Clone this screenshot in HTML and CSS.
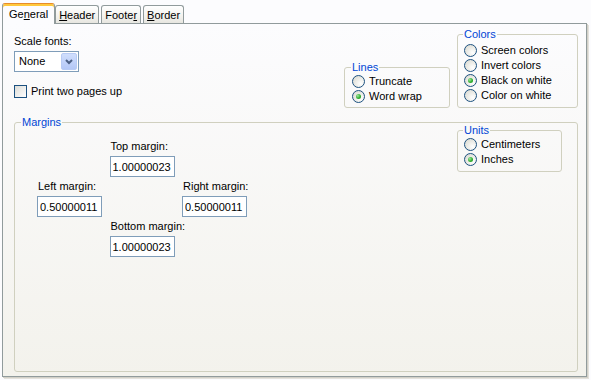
FILE: index.html
```html
<!DOCTYPE html>
<html lang="en">
<head>
  <meta charset="UTF-8" />
  <title>Page Setup</title>
  <link rel="stylesheet" href="styles.css">
</head>
<body>
  <!-- Tab strip -->
  <div class="tabs">
    <div class="tab active">Ge<u>n</u>eral</div>
    <div class="tab"><u>H</u>eader</div>
    <div class="tab">Foote<u>r</u></div>
    <div class="tab"><u>B</u>order</div>
  </div>

  <div class="panel">
    <div class="top-row">
      <div class="general">
        <div class="label">Scale fonts:</div>
        <div class="combo">
          <span class="combo-value">None</span>
          <span class="combo-btn">
            <svg width="8" height="6" viewBox="0 0 8 6"><path d="M1 1 L4 4 L7 1" fill="none" stroke="#4d6185" stroke-width="2"/></svg>
          </span>
        </div>
        <div class="check-row"><span class="check"></span>Print two pages up</div>
      </div>

      <fieldset class="group lines">
        <legend>Lines</legend>
        <div class="radio-row"><span class="radio"></span>Truncate</div>
        <div class="radio-row"><span class="radio on"></span>Word wrap</div>
      </fieldset>

      <fieldset class="group colors">
        <legend>Colors</legend>
        <div class="radio-row"><span class="radio"></span>Screen colors</div>
        <div class="radio-row"><span class="radio"></span>Invert colors</div>
        <div class="radio-row"><span class="radio on"></span>Black on white</div>
        <div class="radio-row"><span class="radio"></span>Color on white</div>
      </fieldset>
    </div>

    <fieldset class="group margins">
      <legend>Margins</legend>
      <div class="margins-body">
        <div class="margin-grid">
          <div class="field top">
            <div class="label">Top margin:</div>
            <input class="num" type="text" value="1.00000023">
          </div>
          <div class="field left">
            <div class="label">Left margin:</div>
            <input class="num" type="text" value="0.50000011">
          </div>
          <div class="field right">
            <div class="label">Right margin:</div>
            <input class="num" type="text" value="0.50000011">
          </div>
          <div class="field bottom">
            <div class="label">Bottom margin:</div>
            <input class="num" type="text" value="1.00000023">
          </div>
        </div>

        <fieldset class="group units">
          <legend>Units</legend>
          <div class="radio-row"><span class="radio"></span>Centimeters</div>
          <div class="radio-row"><span class="radio on"></span>Inches</div>
        </fieldset>
      </div>
    </fieldset>
  </div>
</body>
</html>
```

FILE: styles.css
```css
* {
  box-sizing: border-box;
}

body {
  margin: 0;
  width: 591px;
  height: 380px;
  overflow: hidden;
  background: #fcfcfe;
  color: #000;
  font-family: "Liberation Sans", Arial, sans-serif;
  font-size: 11px;
  line-height: 13px;
}

/* Tab strip */
.tabs {
  display: flex;
  align-items: flex-end;
  height: 23px;
  padding-left: 2px;
}

.tab {
  height: 18px;
  margin-left: 2px;
  padding: 3px 3px 0;
  border: 1px solid #919b9c;
  border-bottom: 0;
  border-radius: 3px 3px 0 0;
  background: linear-gradient(#ffffff, #f3f2ee 60%, #e7e6e0);
}

.tab u {
  text-decoration-thickness: 1px;
}

.tab.active {
  position: relative;
  z-index: 1;
  height: 21px;
  margin-left: 0;
  margin-bottom: -1px;
  padding: 4px 6px 0;
  background: #fcfcfe;
  border-top-color: #e68b2c;
  box-shadow: inset 0 2px 0 #ffc83c;
}

.tab.active + .tab {
  margin-left: 0;
}

/* Tab page */
.panel {
  display: flex;
  flex-direction: column;
  width: 585px;
  height: 354px;
  margin-left: 2px;
  padding: 0 8px 4px 11px;
  border: 1px solid #919b9c;
  background: linear-gradient(#fcfcfe, #f3f2ec);
  box-shadow: 1px 1px 0 #d2d0c8, 2px 2px 0 #e4e2dc;
}

.top-row {
  display: flex;
  align-items: flex-end;
  padding-top: 4px;
}

.general {
  flex: 1;
  align-self: flex-start;
  margin-top: 7px;
}

.label {
  white-space: nowrap;
}

/* Combo box */
.combo {
  display: flex;
  width: 65px;
  height: 21px;
  margin-top: 3px;
  padding: 1px;
  border: 1px solid #7f9db9;
  background: #fff;
}

.combo-value {
  flex: 1;
  padding-left: 3px;
  line-height: 17px;
}

.combo-btn {
  display: flex;
  align-items: center;
  justify-content: center;
  width: 16px;
  border: 1px solid #b8cbf4;
  border-radius: 2px;
  background: linear-gradient(#d0defd, #b4c8f6);
}

.check-row {
  display: flex;
  align-items: center;
  gap: 4px;
  margin-top: 13px;
}

.check {
  width: 13px;
  height: 13px;
  border: 1px solid #1c5180;
  background: linear-gradient(135deg, #dcdcd7, #fff);
}

/* Group boxes */
.group {
  margin: 0;
  min-width: 0;
  border: 1px solid #d0d0bf;
  border-radius: 3px;
}

.group legend {
  margin-left: -1px;
  padding: 0 1px;
  color: #0046d5;
  line-height: 13px;
}

.lines {
  width: 106px;
  margin-right: 7px;
  padding: 0 6px 3px 7px;
}

.colors {
  width: 121px;
  padding: 2px 6px 4px;
}

.radio-row {
  display: flex;
  align-items: center;
  gap: 4px;
  height: 15px;
  white-space: nowrap;
}

.radio {
  display: flex;
  align-items: center;
  justify-content: center;
  flex: none;
  width: 13px;
  height: 13px;
  border: 1px solid #1c5180;
  border-radius: 50%;
  background: radial-gradient(circle at 70% 70%, #fff, #e6e6e0 60%, #d4d4cc);
}

.radio.on::after {
  content: "";
  width: 5px;
  height: 5px;
  border-radius: 50%;
  background: radial-gradient(circle at 35% 35%, #a0e6a0, #30b030 55%, #1c8a1c);
}

/* Margins */
.margins {
  flex: 1;
  margin-top: 8px;
  padding: 0 15px 0 7px;
}

.margins-body {
  display: flex;
  align-items: flex-start;
}

.margin-grid {
  flex: 1;
  display: grid;
  grid-template-columns: repeat(3, 65px);
  column-gap: 7.5px;
  row-gap: 3px;
  padding: 11px 0 0 15px;
}

.field .label {
  margin: 0 0 3px 1px;
}

.field.top { grid-column: 2; grid-row: 1; }
.field.left { grid-column: 1; grid-row: 2; }
.field.right { grid-column: 3; grid-row: 2; }
.field.bottom { grid-column: 2; grid-row: 3; }

.num {
  display: block;
  width: 65px;
  height: 21px;
  margin: 0;
  padding: 0 2px;
  border: 1px solid #7f9db9;
  background: #fff;
  color: #000;
  font: inherit;
}

.units {
  width: 105px;
  margin-top: -5px;
  padding: 0 6px 4px;
}
```
